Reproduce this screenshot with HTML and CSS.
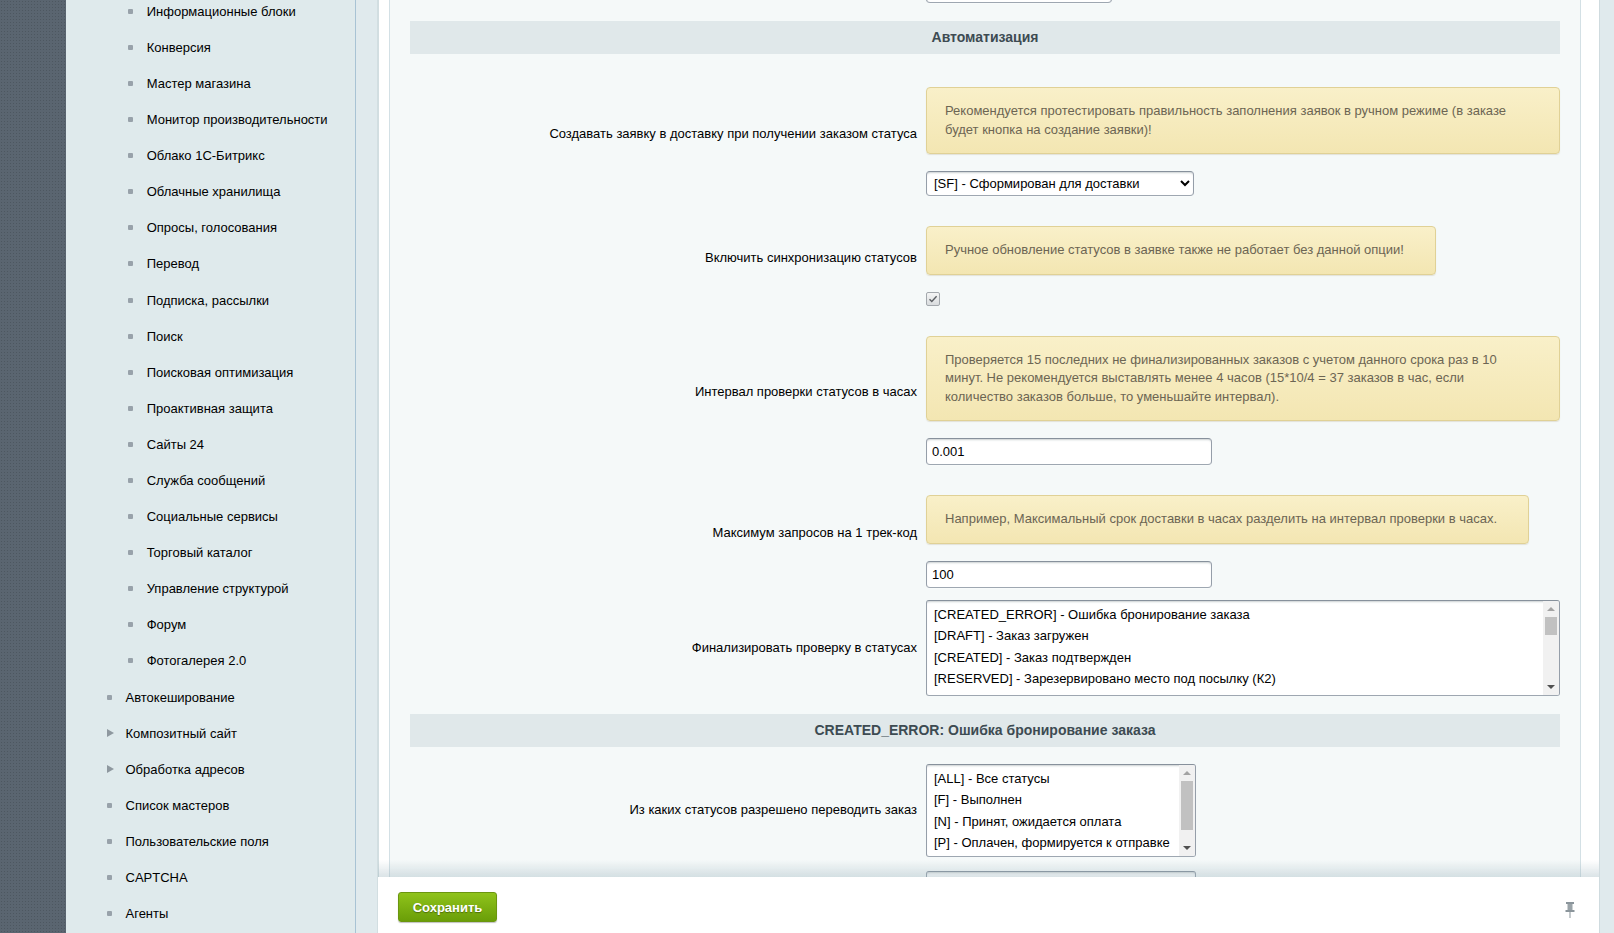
FILE: index.html
```html
<!DOCTYPE html>
<html lang="ru">
<head>
    <meta charset="UTF-8">
    <meta name="viewport" content="width=device-width, initial-scale=1.0">
    <title>Настройки модуля</title>
    <link rel="stylesheet" href="styles.css">
</head>
<body>
    <div class="page">
        <div class="strip"></div>

        <nav class="menu">
            <ul>
                <li class="sub"><span class="dot"></span>Информационные блоки</li>
                <li class="sub"><span class="dot"></span>Конверсия</li>
                <li class="sub"><span class="dot"></span>Мастер магазина</li>
                <li class="sub"><span class="dot"></span>Монитор производительности</li>
                <li class="sub"><span class="dot"></span>Облако 1С-Битрикс</li>
                <li class="sub"><span class="dot"></span>Облачные хранилища</li>
                <li class="sub"><span class="dot"></span>Опросы, голосования</li>
                <li class="sub"><span class="dot"></span>Перевод</li>
                <li class="sub"><span class="dot"></span>Подписка, рассылки</li>
                <li class="sub"><span class="dot"></span>Поиск</li>
                <li class="sub"><span class="dot"></span>Поисковая оптимизация</li>
                <li class="sub"><span class="dot"></span>Проактивная защита</li>
                <li class="sub"><span class="dot"></span>Сайты 24</li>
                <li class="sub"><span class="dot"></span>Служба сообщений</li>
                <li class="sub"><span class="dot"></span>Социальные сервисы</li>
                <li class="sub"><span class="dot"></span>Торговый каталог</li>
                <li class="sub"><span class="dot"></span>Управление структурой</li>
                <li class="sub"><span class="dot"></span>Форум</li>
                <li class="sub"><span class="dot"></span>Фотогалерея 2.0</li>
                <li><span class="dot"></span>Автокеширование</li>
                <li><span class="arrow"></span>Композитный сайт</li>
                <li><span class="arrow"></span>Обработка адресов</li>
                <li><span class="dot"></span>Список мастеров</li>
                <li><span class="dot"></span>Пользовательские поля</li>
                <li><span class="dot"></span>CAPTCHA</li>
                <li><span class="dot"></span>Агенты</li>
            </ul>
        </nav>

        <div class="work">
            <div class="panel">
                <!-- previous option, scrolled out of view -->
                <div class="row">
                    <div class="label"></div>
                    <div class="value"><input class="field narrow" type="text" value=""></div>
                </div>

                <div class="head">Автоматизация</div>

                <div class="row">
                    <div class="label">Создавать заявку в доставку при получении заказом статуса</div>
                    <div class="value">
                        <div class="hint">Рекомендуется протестировать правильность заполнения заявок в ручном режиме (в заказе будет кнопка на создание заявки)!</div>
                        <select class="field drop">
                            <option>[SF] - Сформирован для доставки</option>
                        </select>
                    </div>
                </div>

                <div class="row">
                    <div class="label">Включить синхронизацию статусов</div>
                    <div class="value">
                        <div class="hint">Ручное обновление статусов в заявке также не работает без данной опции!</div>
                        <span class="check">
                            <svg width="14" height="14" viewBox="0 0 14 14"><path d="M3.5 7.2 L5.8 9.5 L10.6 4.3" fill="none" stroke="#5b5f63" stroke-width="1.4"/></svg>
                        </span>
                    </div>
                </div>

                <div class="row">
                    <div class="label">Интервал проверки статусов в часах</div>
                    <div class="value">
                        <div class="hint">Проверяется 15 последних не финализированных заказов с учетом данного срока раз в 10 минут. Не рекомендуется выставлять менее 4 часов (15*10/4 = 37 заказов в час, если количество заказов больше, то уменьшайте интервал).</div>
                        <input class="field text" type="text" value="0.001">
                    </div>
                </div>

                <div class="row">
                    <div class="label">Максимум запросов на 1 трек-код</div>
                    <div class="value">
                        <div class="hint">Например, Максимальный срок доставки в часах разделить на интервал проверки в часах.</div>
                        <input class="field text" type="text" value="100">
                    </div>
                </div>

                <div class="row tight">
                    <div class="label">Финализировать проверку в статусах</div>
                    <div class="value">
                        <div class="listbox wide">
                            <div class="opts">
                                <div class="opt">[CREATED_ERROR] - Ошибка бронирование заказа</div>
                                <div class="opt">[DRAFT] - Заказ загружен</div>
                                <div class="opt">[CREATED] - Заказ подтвержден</div>
                                <div class="opt">[RESERVED] - Зарезервировано место под посылку (К2)</div>
                            </div>
                            <div class="sbar">
                                <span class="sb-btn"><i class="up off"></i></span>
                                <span class="thumb small"></span>
                                <span class="sb-fill"></span>
                                <span class="sb-btn"><i class="down"></i></span>
                            </div>
                        </div>
                    </div>
                </div>

                <div class="head">CREATED_ERROR: Ошибка бронирование заказа</div>

                <div class="row">
                    <div class="label">Из каких статусов разрешено переводить заказ</div>
                    <div class="value">
                        <div class="listbox">
                            <div class="opts">
                                <div class="opt">[ALL] - Все статусы</div>
                                <div class="opt">[F] - Выполнен</div>
                                <div class="opt">[N] - Принят, ожидается оплата</div>
                                <div class="opt">[P] - Оплачен, формируется к отправке</div>
                            </div>
                            <div class="sbar">
                                <span class="sb-btn"><i class="up off"></i></span>
                                <span class="thumb big"></span>
                                <span class="sb-fill"></span>
                                <span class="sb-btn"><i class="down"></i></span>
                            </div>
                        </div>
                    </div>
                </div>

                <div class="row">
                    <div class="label">В какие статусы разрешено переводить заказ</div>
                    <div class="value">
                        <div class="listbox">
                            <div class="opts">
                                <div class="opt">[ALL] - Все статусы</div>
                            </div>
                        </div>
                    </div>
                </div>
            </div>
        </div>
    </div>

    <div class="footer">
        <button class="save">Сохранить</button>
        <svg class="pin" width="10" height="16" viewBox="0 0 10 16">
            <rect x="1" y="0" width="8" height="2" fill="#8b959b"/>
            <rect x="2.5" y="2" width="5" height="6" fill="#9aa3a8"/>
            <rect x="0.5" y="8" width="9" height="2" fill="#8b959b"/>
            <rect x="4.5" y="10" width="1" height="6" fill="#8b959b"/>
        </svg>
    </div>
</body>
</html>
```

FILE: styles.css
```css
body {
    margin: 0;
    font-family: "Liberation Sans", Arial, sans-serif;
    font-size: 13px;
    color: #000;
    background-color: #e0eaed;
    overflow: hidden;
}
.page {
    display: flex;
    height: 100vh;
    overflow: hidden;
}
.strip {
    width: 66px;
    flex-shrink: 0;
    background-color: #5a6570;
    background-image: radial-gradient(rgba(0, 0, 0, 0.14) 0.8px, transparent 1px);
    background-size: 3px 3px;
}

/* left menu */
.menu {
    width: 289px;
    flex-shrink: 0;
    background: #dfeaec;
    border-right: 1px solid #a8c3d4;
}
.menu ul {
    list-style: none;
    margin: -6.75px 0 0;
    padding: 0;
}
.menu li {
    display: flex;
    align-items: center;
    height: 36.1px;
    padding-left: 40.5px;
    white-space: nowrap;
}
.menu li.sub {
    padding-left: 61.7px;
}
.dot {
    width: 5px;
    height: 5px;
    border-radius: 1px;
    background: #98a2aa;
    margin-right: 14px;
}
.arrow {
    width: 0;
    height: 0;
    border-left: 7px solid #8e989f;
    border-top: 4px solid transparent;
    border-bottom: 4px solid transparent;
    margin-right: 12px;
}

/* work area */
.work {
    flex: 1;
    margin: 0 14px 0 21px;
    background: #fff;
    border-left: 2px solid #d2dee1;
    border-right: 1px solid #cfdbdf;
    padding: 0 18px 0 10px;
}
.panel {
    margin-top: -31px;
    background: #f5f9f9;
    border: 1px solid #d3e0e5;
    border-top: 0;
    padding: 0 20px;
    height: 1100px;
}
.head {
    margin: 11px 0 10px;
    height: 33px;
    line-height: 32px;
    background: #e0e8ea;
    text-align: center;
    font-size: 14px;
    font-weight: bold;
    color: #3d4b52;
}
.row {
    display: grid;
    grid-template-columns: 516px 1fr;
    align-items: center;
    padding: 7px 0;
}
.row.tight {
    padding-top: 5px;
}
.label {
    text-align: right;
    padding-right: 9px;
    line-height: 16px;
}
.value {
    display: flex;
    flex-direction: column;
    align-items: flex-start;
}
.hint {
    margin: 16px 0 17px;
    padding: 14px 31px 14px 18px;
    line-height: 18.5px;
    color: #6c6553;
    background: linear-gradient(#f9f0c9, #f3e6b2);
    border: 1px solid #e0d196;
    border-radius: 4px;
    box-shadow: 0 1px 1px rgba(120, 100, 40, 0.15);
}

/* controls */
.field {
    box-sizing: border-box;
    font-family: "Liberation Sans", Arial, sans-serif;
    font-size: 13px;
    color: #000;
    background: #fff;
    border: 1px solid;
    border-color: #87919c #959ea9 #9ea7b1 #959ea9;
    border-radius: 4px;
    box-shadow: 0 1px 0 rgba(255, 255, 255, 0.3), inset 0 2px 2px -1px rgba(180, 188, 191, 0.7);
}
.narrow {
    width: 186px;
    height: 27px;
}
.text {
    width: 286px;
    height: 27px;
    padding: 0 5px;
}
.drop {
    width: 268px;
    height: 25px;
    padding: 0 3px;
}
.check {
    display: block;
    box-sizing: border-box;
    width: 14px;
    height: 14px;
    border: 1px solid #a3a8ad;
    border-radius: 2px;
    background: linear-gradient(#f4f5f5, #d9dcde);
}
.check svg {
    display: block;
    margin: -1px;
}
.listbox {
    box-sizing: border-box;
    display: flex;
    width: 270px;
    height: 93px;
    background: #fff;
    border: 1px solid;
    border-color: #87919c #959ea9 #9ea7b1 #959ea9;
    border-radius: 3px;
    box-shadow: inset 0 2px 2px -1px rgba(180, 188, 191, 0.7);
    overflow: hidden;
}
.listbox.wide {
    width: 634px;
    height: 96px;
}
.opts {
    flex: 1;
    padding: 3px 7px;
    overflow: hidden;
    white-space: nowrap;
}
.opt {
    padding: 3px 0;
    line-height: 15.6px;
}
.sbar {
    width: 16px;
    display: flex;
    flex-direction: column;
    background: #f1f1f1;
}
.sb-btn {
    height: 16px;
    display: flex;
    align-items: center;
    justify-content: center;
}
.sb-fill {
    flex: 1;
}
.up {
    border-bottom: 4px solid #505050;
    border-left: 4px solid transparent;
    border-right: 4px solid transparent;
}
.down {
    border-top: 4px solid #505050;
    border-left: 4px solid transparent;
    border-right: 4px solid transparent;
}
.up.off {
    border-bottom-color: #a3a3a3;
}
.thumb {
    margin: 0 2px;
    background: #c1c1c1;
}
.thumb.small {
    height: 18px;
}
.thumb.big {
    height: 49px;
}

/* fixed bottom bar */
.footer {
    position: fixed;
    left: 378px;
    right: 15px;
    bottom: 0;
    height: 56px;
    box-sizing: border-box;
    padding: 15px 24px 0 20px;
    background: #fff;
    display: flex;
    justify-content: space-between;
    align-items: flex-start;
}
.footer::before {
    content: "";
    position: absolute;
    left: 0;
    right: 0;
    top: -17px;
    height: 17px;
    background: linear-gradient(rgba(150, 175, 185, 0), rgba(150, 175, 185, 0.35));
}
.save {
    width: 99px;
    height: 30px;
    font-family: "Liberation Sans", Arial, sans-serif;
    font-size: 13px;
    font-weight: bold;
    color: #fff;
    text-shadow: 0 1px 1px rgba(0, 0, 0, 0.35);
    background: linear-gradient(#8fc31b, #6a9e08);
    border: 1px solid #6b960f;
    border-radius: 3px;
    box-shadow: 0 1px 1px rgba(0, 0, 0, 0.25);
    cursor: pointer;
}
.pin {
    margin-top: 10px;
}
```
